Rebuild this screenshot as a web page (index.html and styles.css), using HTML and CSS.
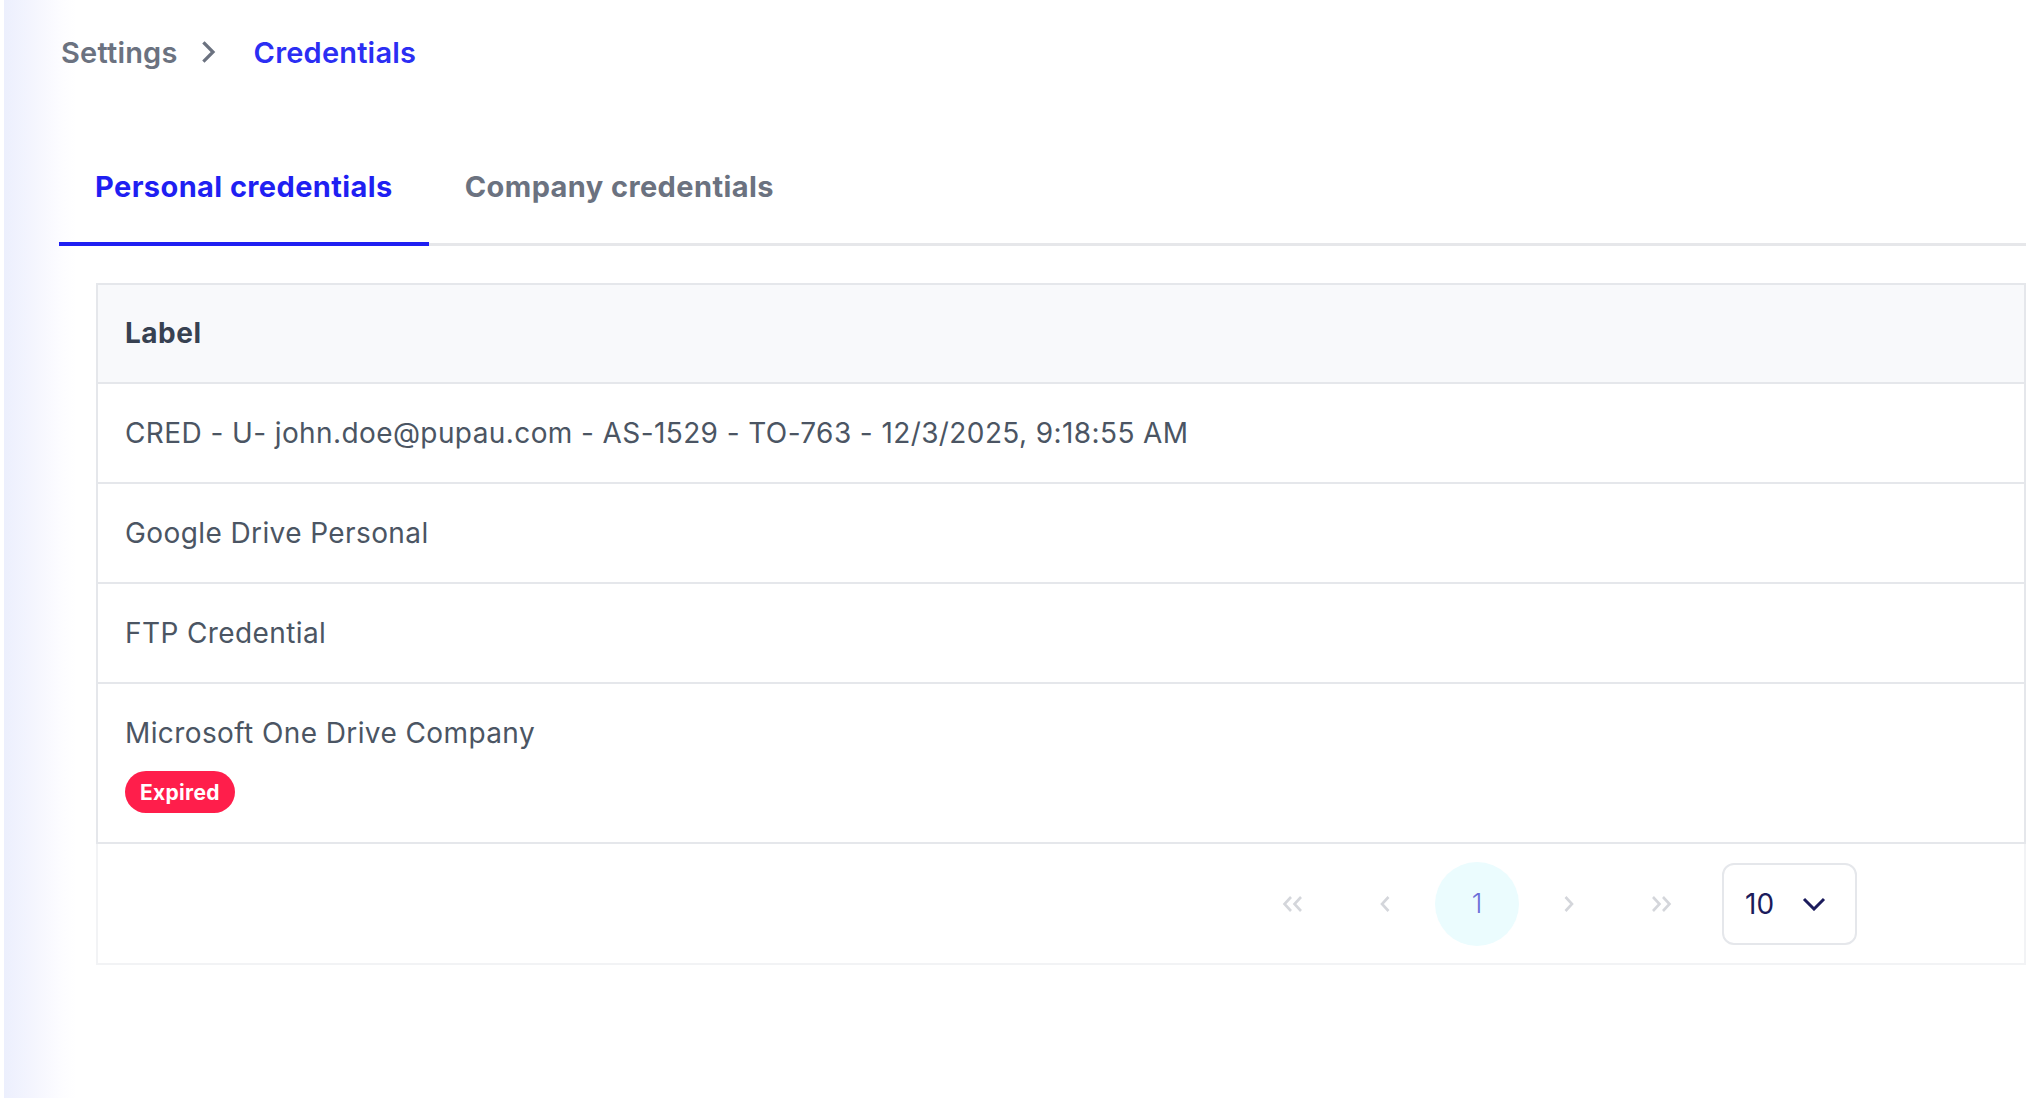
FILE: index.html
```html
<!DOCTYPE html>
<html lang="en">
<head>
<meta charset="utf-8">
<title>Credentials</title>
<link rel="stylesheet" href="styles.css">
</head>
<body>
<div class="app">
  <div class="rail"></div>
  <main class="main">
    <nav class="crumbs">
      <span class="crumb">Settings</span>
      <svg class="crumb-sep" width="14" height="22" viewBox="0 0 14 22"><path d="M2.5 2.5 L11 11 L2.5 19.5" fill="none" stroke="#6b7280" stroke-width="3.2" stroke-linecap="square"/></svg>
      <span class="crumb crumb-current">Credentials</span>
    </nav>

    <div class="tabs">
      <button class="tab tab-active">Personal credentials</button>
      <button class="tab">Company credentials</button>
    </div>

    <section class="card">
      <div class="table">
        <div class="row row-head">Label</div>
        <div class="row">CRED - U- john.doe@pupau.com - AS-1529 - TO-763 - 12/3/2025, 9:18:55 AM</div>
        <div class="row">Google Drive Personal</div>
        <div class="row">FTP Credential</div>
        <div class="row row-stack">
          <span>Microsoft One Drive Company</span>
          <span class="badge">Expired</span>
        </div>
      </div>
      <div class="foot">
        <div class="pager">
          <button class="pg" aria-label="First page">
            <svg width="24" height="18" viewBox="0 0 24 18"><path d="M10 2 L3.5 9 L10 16 M20 2 L13.5 9 L20 16" fill="none" stroke="#d4d6db" stroke-width="2.6"/></svg>
          </button>
          <button class="pg" aria-label="Previous page">
            <svg width="12" height="18" viewBox="0 0 12 18"><path d="M9.5 2 L3 9 L9.5 16" fill="none" stroke="#d4d6db" stroke-width="2.6"/></svg>
          </button>
          <button class="pg pg-current">1</button>
          <button class="pg" aria-label="Next page">
            <svg width="12" height="18" viewBox="0 0 12 18"><path d="M2.5 2 L9 9 L2.5 16" fill="none" stroke="#d4d6db" stroke-width="2.6"/></svg>
          </button>
          <button class="pg" aria-label="Last page">
            <svg width="24" height="18" viewBox="0 0 24 18"><path d="M4 2 L10.5 9 L4 16 M14 2 L20.5 9 L14 16" fill="none" stroke="#d4d6db" stroke-width="2.6"/></svg>
          </button>
          <div class="size">
            <span>10</span>
            <svg width="24" height="14" viewBox="0 0 24 14"><path d="M2 2 L12 12 L22 2" fill="none" stroke="#1b1b5c" stroke-width="3"/></svg>
          </div>
        </div>
      </div>
    </section>
  </main>
</div>
</body>
</html>
```

FILE: styles.css
```css
* {
  box-sizing: border-box;
}

html,
body {
  margin: 0;
  height: 100%;
  background: #ffffff;
  font-family: "Inter", "Noto Sans", "DejaVu Sans", sans-serif;
  overflow: hidden;
}

.app {
  display: flex;
  min-height: 100vh;
}

.rail {
  width: 4px;
  flex-shrink: 0;
  background: #ffffff;
}

.main {
  flex: 1;
  padding: 30px 0 0 55px;
  background: linear-gradient(90deg, #eceffd 0, #f4f5fe 28px, #fcfcff 55px, #ffffff 72px);
}

/* breadcrumb */
.crumbs {
  display: flex;
  align-items: center;
  height: 44px;
  padding-left: 2px;
}

.crumb {
  font-size: 29px;
  font-weight: 600;
  color: #6b7280;
  letter-spacing: 0.2px;
}

.crumb-sep {
  margin: 0 38px 0 24px;
}

.crumb-current {
  color: #2b2ef3;
}

/* tabs */
.tabs {
  display: flex;
  margin-top: 56px;
  border-bottom: 3px solid #e6e7ea;
}

.tab {
  position: relative;
  padding: 37px 36px;
  border: 0;
  background: none;
  font-family: inherit;
  font-size: 29px;
  line-height: 39px;
  font-weight: 700;
  color: #6b7280;
  letter-spacing: 0.4px;
}

.tab-active {
  color: #1f1ff2;
}

.tab-active::after {
  content: "";
  position: absolute;
  left: 0;
  right: 0;
  bottom: -3px;
  height: 4px;
  background: #1f1ff2;
}

/* table card */
.card {
  margin: 37px 0 0 37px;
}

.table {
  border: 2px solid #e5e7eb;
}

.row {
  display: flex;
  align-items: center;
  min-height: 100px;
  padding: 0 27px;
  border-bottom: 2px solid #e5e7eb;
  font-size: 28px;
  line-height: 39px;
  color: #4b5563;
  letter-spacing: 0.4px;
}

.row:last-child {
  border-bottom: 0;
}

.row-head {
  min-height: 99px;
  background: #f8f9fb;
  font-weight: 700;
  color: #374151;
  letter-spacing: 0.5px;
}

.row-stack {
  flex-direction: column;
  align-items: flex-start;
  gap: 18px;
  padding-top: 30px;
  padding-bottom: 29px;
}

.badge {
  display: inline-flex;
  align-items: center;
  height: 42px;
  padding: 0 15px;
  border-radius: 21px;
  background: #ff1e4b;
  color: #ffffff;
  font-size: 21px;
  font-weight: 700;
  line-height: 1;
  letter-spacing: 0.3px;
}

/* pagination */
.foot {
  border: 2px solid #f2f3f5;
  border-top: 0;
}

.pager {
  display: flex;
  align-items: center;
  justify-content: flex-end;
  gap: 8px;
  height: 119px;
  padding-right: 167px;
}

.pg {
  display: flex;
  align-items: center;
  justify-content: center;
  width: 84px;
  height: 84px;
  padding: 0;
  border: 0;
  border-radius: 50%;
  background: none;
  font-family: inherit;
  font-size: 27px;
  font-weight: 300;
  color: #6b6fd8;
}

.pg-current {
  background: #ebfcfe;
}

.size {
  display: flex;
  align-items: center;
  justify-content: space-between;
  width: 135px;
  height: 82px;
  margin-left: 11px;
  padding: 0 29px 0 21px;
  border: 2px solid #e5e7eb;
  border-radius: 12px;
  font-size: 28px;
  color: #1b1b5c;
}
```
